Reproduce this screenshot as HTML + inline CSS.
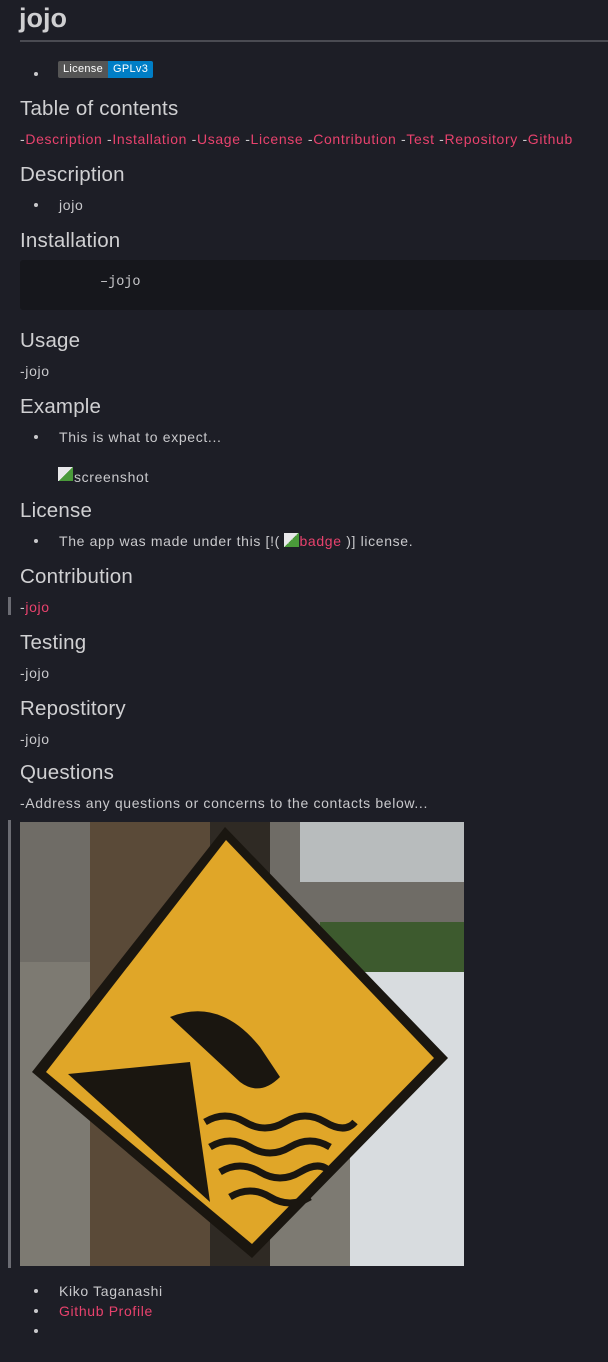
<!DOCTYPE html>
<html><head><meta charset="utf-8"><style>
body{margin:0;width:608px;height:1362px;background:#1d1e26;font-family:"Liberation Sans",sans-serif;color:#c9c9cc;position:relative;overflow:hidden}
.a{position:absolute;white-space:nowrap}
.h{font-size:20.5px;line-height:24px;color:#d0d0d2;letter-spacing:0.2px}
.t{font-size:14px;line-height:18px;letter-spacing:0.65px}
.l{color:#e8426d}
.b{position:absolute;left:34px;width:4px;height:4px;border-radius:50%;background:#c9c9cc}
</style></head><body>
<div class="a" style="left:19px;top:2px;font-size:27px;line-height:32px;font-weight:bold;color:#cfcfd1">jojo</div>
<div class="a" style="left:20px;top:40px;width:588px;height:2px;background:#4a4b52"></div>
<div class="b" style="top:72px"></div>
<div class="a" style="left:58px;top:61px;height:17px;border-radius:2px;overflow:hidden;font-size:11px;line-height:17px;color:#fff;display:flex;letter-spacing:0.3px"><span style="background:#555;padding:0 5px">License</span><span style="background:#007ec6;padding:0 5px">GPLv3</span></div>
<div class="a h" style="left:20px;top:97px">Table of contents</div>
<div class="a t" style="left:20px;top:130px">-<span class="l">Description</span> -<span class="l">Installation</span> -<span class="l">Usage</span> -<span class="l">License</span> -<span class="l">Contribution</span> -<span class="l">Test</span> -<span class="l">Repository</span> -<span class="l">Github</span></div>
<div class="a h" style="left:20px;top:163px">Description</div>
<div class="b" style="top:203px"></div>
<div class="a t" style="left:59px;top:196px">jojo</div>
<div class="a h" style="left:20px;top:229px">Installation</div>
<div class="a" style="left:20px;top:260px;width:600px;height:50px;background:#16171c;border-radius:3px"></div>
<div class="a" style="left:100px;top:274px;font-family:'Liberation Mono',monospace;font-size:13.5px;line-height:18px">–jojo</div>
<div class="a h" style="left:20px;top:329px">Usage</div>
<div class="a t" style="left:20px;top:362px">-jojo</div>
<div class="a h" style="left:20px;top:395px">Example</div>
<div class="b" style="top:435px"></div>
<div class="a t" style="left:59px;top:428px">This is what to expect...</div>
<div class="a" style="left:58px;top:467px;width:15px;height:14px;background:linear-gradient(135deg,#e8e8ea 50%,#4a9a3a 50%)"></div>
<div class="a t" style="left:74px;top:468px">screenshot</div>
<div class="a h" style="left:20px;top:499px">License</div>
<div class="b" style="top:539px"></div>
<div class="a t" style="left:59px;top:532px">The app was made under this [!( <span style="display:inline-block;width:15px;height:14px;background:linear-gradient(135deg,#e8e8ea 50%,#4a9a3a 50%);vertical-align:-1px"></span><span class="l">badge</span> )] license.</div>
<div class="a h" style="left:20px;top:565px">Contribution</div>
<div class="a" style="left:8px;top:597px;width:3px;height:18px;background:#6b6c73"></div>
<div class="a t" style="left:20px;top:598px">-<span class="l">jojo</span></div>
<div class="a h" style="left:20px;top:631px">Testing</div>
<div class="a t" style="left:20px;top:664px">-jojo</div>
<div class="a h" style="left:20px;top:697px">Repostitory</div>
<div class="a t" style="left:20px;top:730px">-jojo</div>
<div class="a h" style="left:20px;top:761px">Questions</div>
<div class="a t" style="left:20px;top:794px">-Address any questions or concerns to the contacts below...</div>
<div class="a" style="left:8px;top:820px;width:3px;height:448px;background:#6b6c73"></div>
<svg class="a" style="left:20px;top:822px" width="444" height="444" viewBox="0 0 444 444">
<rect width="444" height="444" fill="#7d7a72"/>
<rect x="0" y="0" width="444" height="140" fill="#6f6c66"/>
<rect x="280" y="0" width="164" height="60" fill="#b8bcbd"/>
<rect x="300" y="100" width="144" height="160" fill="#3d5a2e"/>
<rect x="330" y="150" width="114" height="294" fill="#d8dcdf"/>
<rect x="70" y="0" width="120" height="444" fill="#5a4a38"/>
<rect x="190" y="0" width="60" height="444" fill="#2f2a24"/>
<polygon points="205,5 428,236 232,436 12,250" fill="#1a1610"/>
<polygon points="206,18 414,236 232,422 26,250" fill="#e0a628"/>
<polygon points="48,252 170,240 190,380" fill="#1a1610"/>
<path d="M150,195 q50,-20 90,30 l20,30 q-20,20 -40,5 z" fill="#1a1610"/>
<g stroke="#1a1610" stroke-width="7" fill="none">
<path d="M185,300 q20,-12 40,0 t40,0 t40,0 t30,0"/><path d="M190,325 q20,-12 40,0 t40,0 t40,0"/><path d="M200,350 q20,-12 40,0 t40,0 t30,0"/><path d="M210,375 q20,-12 40,0 t40,0"/>
</g>
</svg>
<div class="b" style="top:1289px"></div>
<div class="a t" style="left:59px;top:1282px">Kiko Taganashi</div>
<div class="b" style="top:1309px"></div>
<div class="a t l" style="left:59px;top:1302px">Github Profile</div>
<div class="b" style="top:1329px"></div>
</body></html>
